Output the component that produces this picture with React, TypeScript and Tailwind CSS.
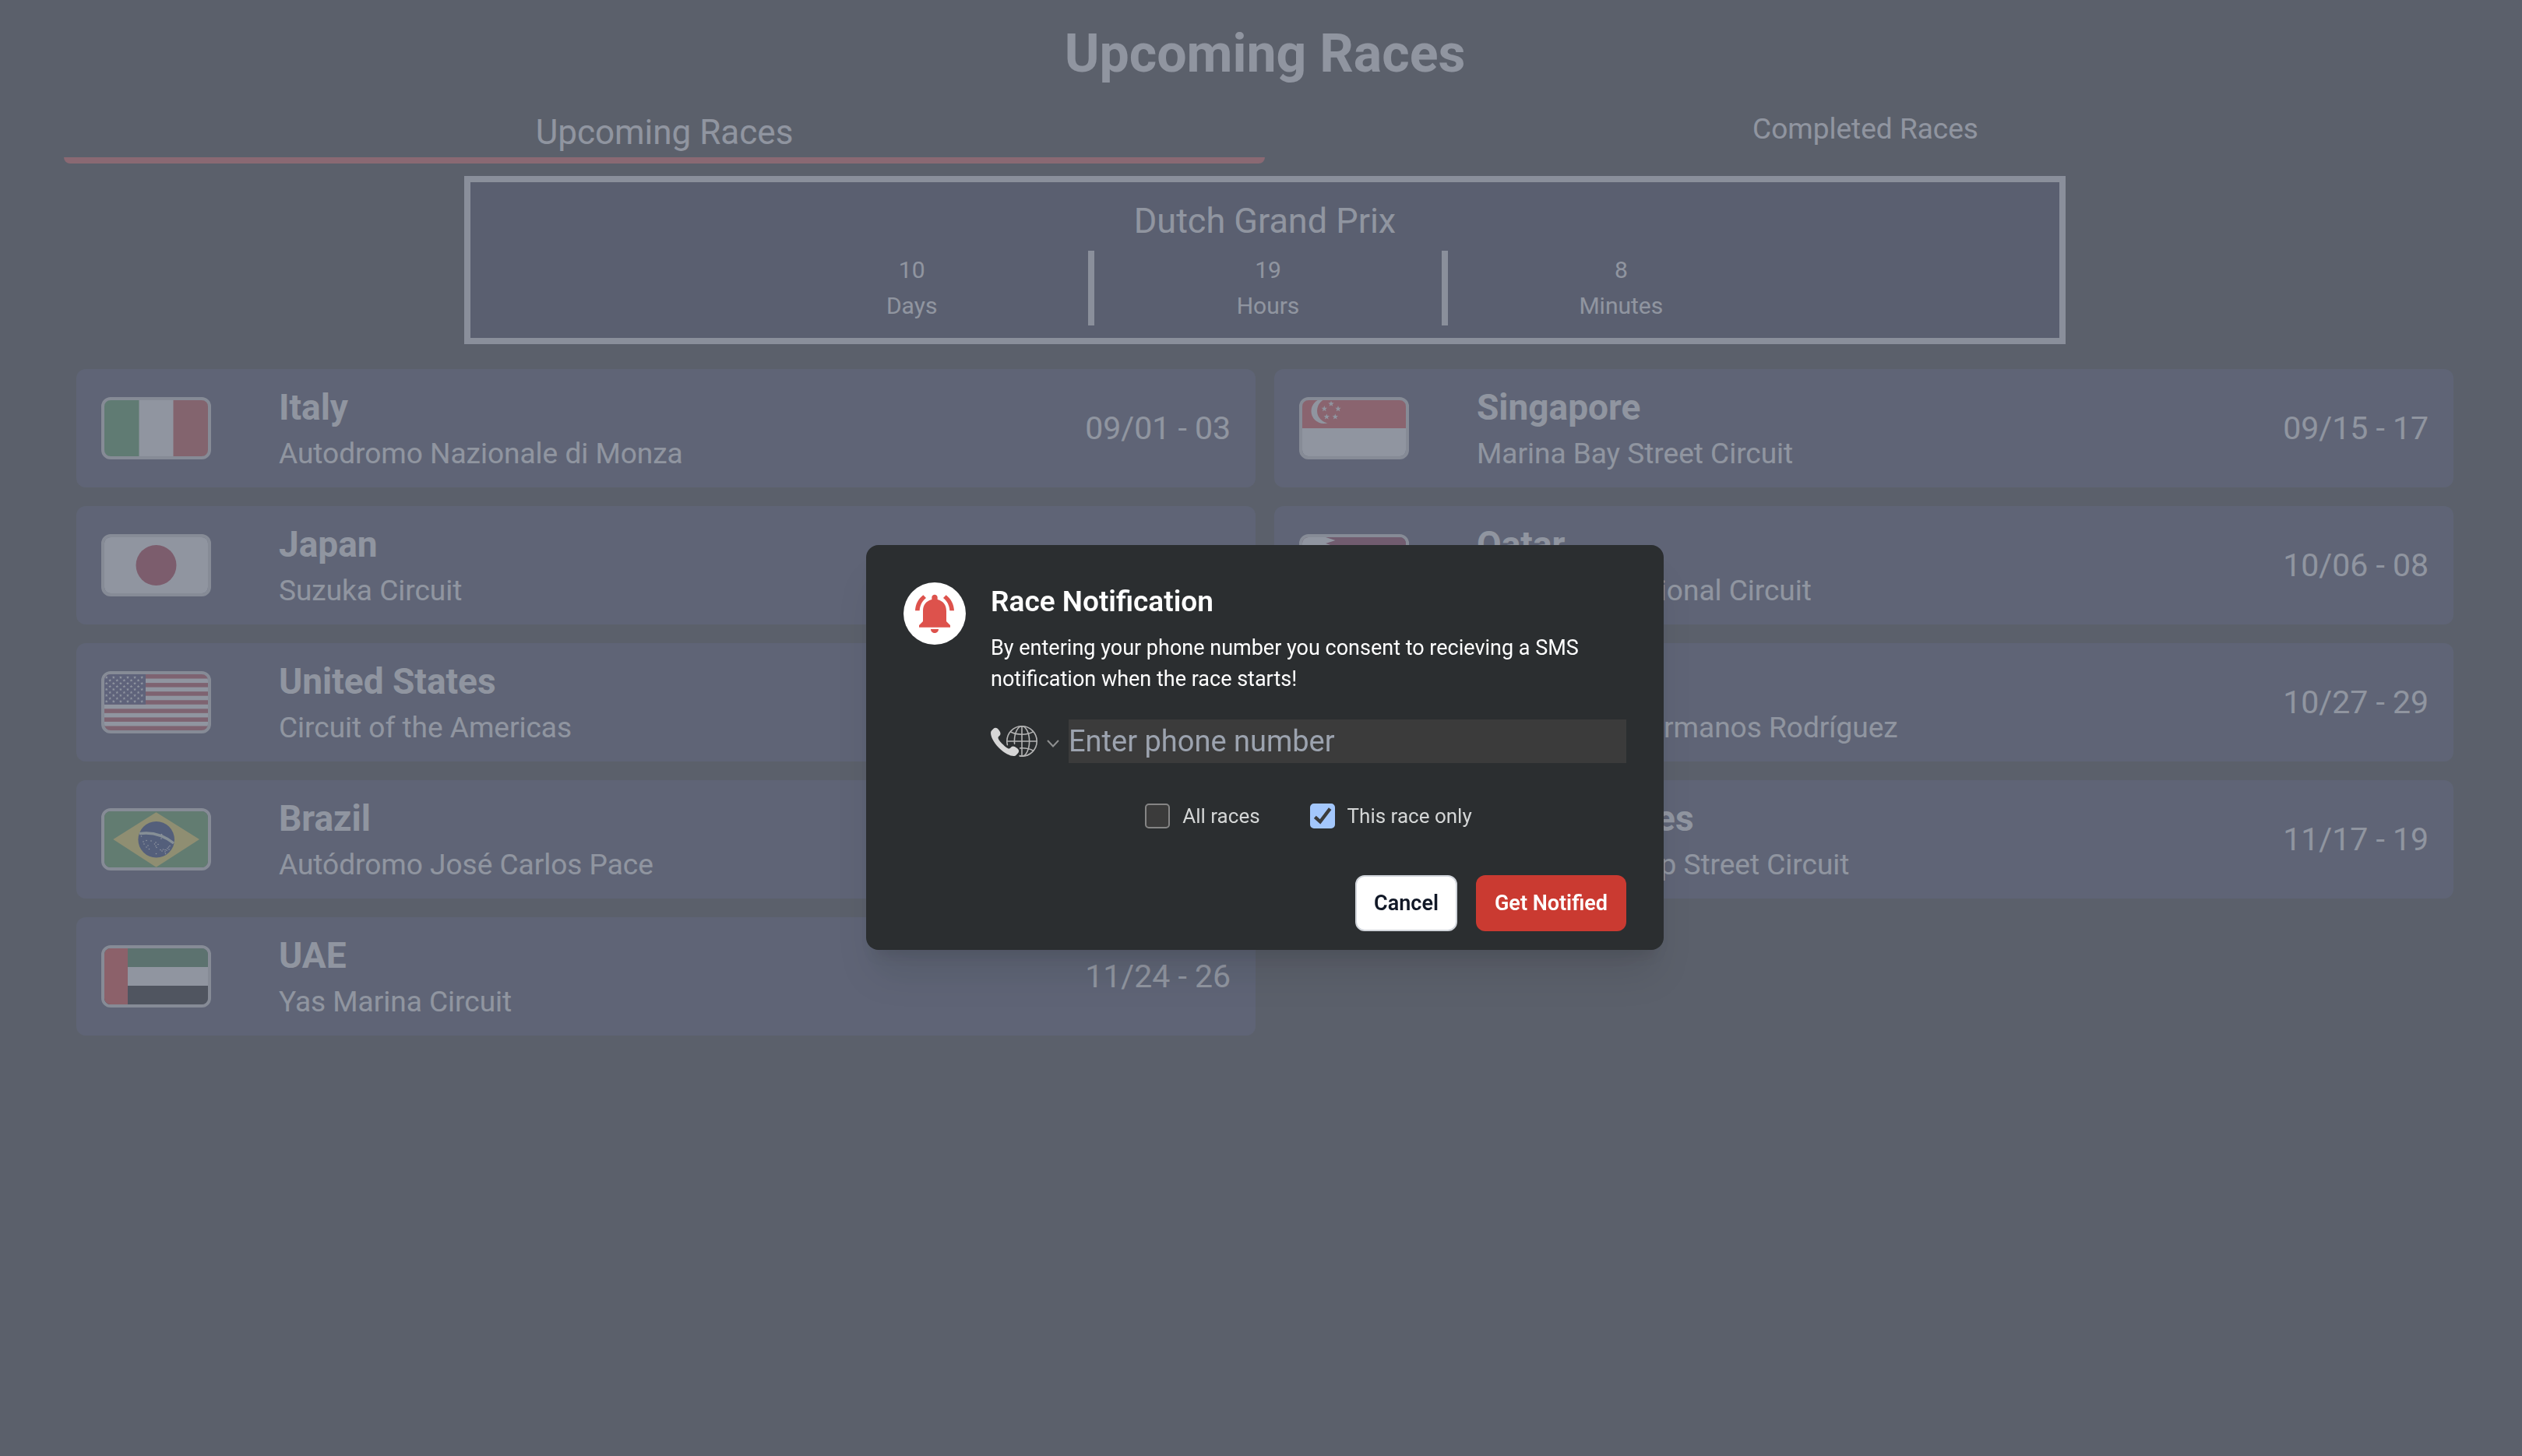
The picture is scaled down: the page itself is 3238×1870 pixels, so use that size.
import { useState, type ReactNode } from "react";

function starPoints(cx: number, cy: number, r: number) {
  return Array.from({ length: 10 }, (_, i) => {
    const radius = i % 2 === 0 ? r : r * 0.42;
    const angle = -Math.PI / 2 + (i * Math.PI) / 5;
    return `${(cx + radius * Math.cos(angle)).toFixed(2)},${(cy + radius * Math.sin(angle)).toFixed(2)}`;
  }).join(" ");
}

const singaporeStars = [[37, 4.7], [28.3, 11], [46, 11], [31.3, 21.3], [42.3, 21.3]];

const usStars = Array.from({ length: 9 }, (_, row) =>
  Array.from({ length: row % 2 === 0 ? 6 : 5 }, (_, col) => [(row % 2 === 0 ? 2.7 : 7.2) + col * 9.1, 4 + row * 3.87]),
).flat();

const brazilStars = [
  [47.5, 32], [54, 37.5], [60, 38], [51, 42], [54, 46], [56, 44], [57.5, 48.5], [50, 39], [73.5, 29.5], [73, 35],
  [66, 40], [64.5, 42], [69, 42.5], [66, 44.5], [67, 46.5], [66.5, 54.5], [72, 49.5], [74, 51], [75.5, 49], [78, 52],
  [78.5, 54.5], [80, 50], [81, 47.5], [82.5, 46], [84, 44.5], [83, 49], [78, 49.5],
];

const qatarEdge = Array.from({ length: 9 }, (_, i) => `L42.5 ${i * 8 + 4}L30 ${i * 8 + 8}`).join("");

const flags: Record<string, ReactNode> = {
  Italy: (
    <>
      <rect width="133" height="72" fill="#fff" />
      <rect width="44.5" height="72" fill="#40964c" />
      <rect x="88.5" width="44.5" height="72" fill="#cc3e3a" />
    </>
  ),
  Singapore: (
    <>
      <rect width="133" height="72" fill="#fff" />
      <rect width="133" height="36" fill="#e63e3c" />
      <circle cx="27.5" cy="14" r="16" fill="#fff" />
      <circle cx="35" cy="13.5" r="16" fill="#e63e3c" />
      {singaporeStars.map(([x, y]) => (
        <polygon key={`${x}-${y}`} points={starPoints(x, y, 3.9)} fill="#fff" />
      ))}
    </>
  ),
  Japan: (
    <>
      <rect width="133" height="72" fill="#fff" />
      <circle cx="66.5" cy="36" r="26" fill="#b02036" />
    </>
  ),
  Qatar: (
    <>
      <rect width="133" height="72" fill="#841c3c" />
      <path d={`M0 0L30 0${qatarEdge}L0 72Z`} fill="#fff" />
    </>
  ),
  "United States": (
    <>
      <rect width="133" height="72" fill="#fff" />
      {[0, 1, 2, 3, 4, 5, 6].map((i) => (
        <rect key={i} y={i * 11.08} width="133" height="5.54" fill="#b83a44" />
      ))}
      <rect width="53" height="38.8" fill="#3c3b6e" />
      {usStars.map(([x, y]) => (
        <polygon key={`${x}-${y}`} points={starPoints(x, y, 2.1)} fill="#fff" />
      ))}
    </>
  ),
  Mexico: (
    <>
      <rect width="133" height="72" fill="#fff" />
      <rect width="44.5" height="72" fill="#1f6847" />
      <rect x="88.5" width="44.5" height="72" fill="#cc2936" />
    </>
  ),
  Brazil: (
    <>
      <rect width="133" height="72" fill="#489a44" />
      <path d="M11.3 36L66.5 1.3L122 36L66.5 71.7Z" fill="#fae248" />
      <circle cx="66.7" cy="36.3" r="23.3" fill="#10286c" />
      <path d="M45 28.6Q69 25 89 41" fill="none" stroke="#d8e8d8" strokeWidth="3.4" />
      {brazilStars.map(([x, y]) => (
        <circle key={`${x}-${y}`} cx={x} cy={y} r="0.8" fill="#fff" />
      ))}
    </>
  ),
  UAE: (
    <>
      <rect width="133" height="24" fill="#30763e" />
      <rect y="24" width="133" height="24" fill="#fff" />
      <rect y="48" width="133" height="24" fill="#000" />
      <rect width="30" height="72" fill="#f0322a" />
    </>
  ),
};

const races = [
  { country: "Italy", circuit: "Autodromo Nazionale di Monza", date: "09/01 - 03" },
  { country: "Singapore", circuit: "Marina Bay Street Circuit", date: "09/15 - 17" },
  { country: "Japan", circuit: "Suzuka Circuit", date: "09/22 - 24" },
  { country: "Qatar", circuit: "Losail International Circuit", date: "10/06 - 08" },
  { country: "United States", circuit: "Circuit of the Americas", date: "10/20 - 22" },
  { country: "Mexico", circuit: "Autódromo Hermanos Rodríguez", date: "10/27 - 29" },
  { country: "Brazil", circuit: "Autódromo José Carlos Pace", date: "11/03 - 05" },
  { country: "United States", circuit: "Las Vegas Strip Street Circuit", date: "11/17 - 19" },
  { country: "UAE", circuit: "Yas Marina Circuit", date: "11/24 - 26" },
];

const countdown = [
  { value: 10, unit: "Days" },
  { value: 19, unit: "Hours" },
  { value: 8, unit: "Minutes" },
];

function RaceCard({ country, circuit, date }: (typeof races)[number]) {
  return (
    <li className="flex items-center rounded-xl bg-[#3c3f58] px-8 text-white">
      <svg
        viewBox="0 0 133 72"
        preserveAspectRatio="none"
        role="img"
        aria-label={`Flag of ${country}`}
        className="h-20 w-[141px] shrink-0 rounded-xl border-4 border-[#d8d8d8]"
      >
        {flags[country]}
      </svg>
      <div className="ml-[87px] flex-1 pt-5 pb-3">
        <h3 className="text-[46px] leading-[58px] font-bold">{country}</h3>
        <p className="text-[37px] leading-[62px]">{circuit}</p>
      </div>
      <p className="text-[41px] leading-[60px]">{date}</p>
    </li>
  );
}

function BellIcon() {
  return (
    <svg viewBox="0 0 240 240" className="size-20 shrink-0 rounded-full bg-white" aria-hidden="true">
      <g fill="#dd524c">
        <path d="M109 58C109 44 131 44 131 58V66C152 71 165 87 165 110V150L180 165V173H60V165L75 150V110C75 87 88 71 109 66Z" />
        <path d="M105 180H135C135 200 105 200 105 180Z" />
        <path d="M45 109C46 84 57 64 76 49L87 60C72 72 63 88 62 109Z" />
        <path d="M195 109C194 84 183 64 164 49L153 60C168 72 177 88 178 109Z" />
      </g>
    </svg>
  );
}

function InternationalIcon() {
  return (
    <svg viewBox="0 0 75 50" className="h-10 w-[60px]" aria-hidden="true">
      <g stroke="#b4b4b4" fill="none" strokeWidth="2" strokeMiterlimit="10">
        <path strokeLinecap="round" d="M47.2,36.1C48.1,36,49,36,50,36c7.4,0,14,1.7,18.5,4.3" />
        <path d="M68.6,9.6C64.2,12.3,57.5,14,50,14c-7.4,0-14-1.7-18.5-4.3" />
        <line x1="26" y1="25" x2="74" y2="25" />
        <line x1="50" y1="1" x2="50" y2="49" />
        <path
          strokeLinecap="round"
          d="M46.3,48.7c1.2,0.2,2.5,0.3,3.7,0.3c13.3,0,24-10.7,24-24S63.3,1,50,1S26,11.7,26,25c0,2,0.3,3.9,0.7,5.8"
        />
        <path
          strokeLinecap="round"
          d="M46.8,48.2c1,0.6,2.1,0.8,3.2,0.8c6.6,0,12-10.7,12-24S56.6,1,50,1S38,11.7,38,25c0,1.4,0.1,2.7,0.2,4c0,0.1,0,0.2,0,0.2"
        />
      </g>
      <path
        fill="#d6d6d6"
        d="M12.4,17.9c2.9-2.9,5.4-4.8,0.3-11.2S4.1,5.2,1.3,8.1C-2,11.4,1.1,23.5,13.1,35.6s24.3,15.2,27.5,11.9c2.8-2.8,7.8-6.3,1.4-11.5s-8.3-2.6-11.2,0.3c-2,2-7.2-2.2-11.7-6.7S10.4,19.9,12.4,17.9z"
      />
    </svg>
  );
}

function Checkbox({ label, checked, onChange }: { label: string; checked: boolean; onChange: () => void }) {
  return (
    <label className="flex items-center gap-4 text-[26px] leading-10 text-[#d4d6d6]">
      <span className="relative size-8">
        <input
          type="checkbox"
          checked={checked}
          onChange={onChange}
          className="block size-8 appearance-none rounded-[5px] border-2 border-[#858585] bg-[#3b3b3b] checked:border-[#a3c7fc] checked:bg-[#a3c7fc]"
        />
        {checked && (
          <svg viewBox="0 0 96 96" className="pointer-events-none absolute inset-0 size-8" aria-hidden="true">
            <path d="M19 52L39 70L77 20" fill="none" stroke="#3b3b3b" strokeWidth="13" />
          </svg>
        )}
      </span>
      {label}
    </label>
  );
}

function NotificationDialog() {
  const [scope, setScope] = useState<"all" | "one">("one");
  return (
    <div className="fixed inset-0 grid place-items-center bg-[#6b7280]/75 pt-[50px] pl-[10px]">
      <div
        role="dialog"
        aria-modal="true"
        aria-labelledby="dialog-title"
        className="w-[1024px] rounded-2xl bg-[#2b2e30] px-12 pt-12 pb-6 shadow-[0_40px_50px_-10px_rgb(0_0_0/0.1),0_16px_20px_-12px_rgb(0_0_0/0.1)]"
      >
        <div className="flex gap-8">
          <BellIcon />
          <div className="flex-1 text-white">
            <h2 id="dialog-title" className="text-[37px] leading-[50px] font-semibold">
              Race Notification
            </h2>
            <p className="mt-3.5 text-[27px] leading-10">
              By entering your phone number you consent to recieving a SMS notification when the race starts!
            </p>
            <div className="mt-8 flex items-center">
              <div className="relative mr-3 flex items-center gap-3">
                <InternationalIcon />
                <svg viewBox="0 0 16 16" className="size-4" aria-hidden="true">
                  <path d="M1 7L8 14.5L15 7" fill="none" stroke="#8f9091" strokeWidth="2" />
                </svg>
                <select aria-label="Phone number country" className="absolute inset-0 w-full opacity-0">
                  <option value="">International</option>
                </select>
              </div>
              <input
                type="tel"
                aria-label="Phone number"
                placeholder="Enter phone number"
                className="h-14 min-w-0 flex-1 bg-[#3b3b3b] text-[38px] text-white placeholder:text-[#9ca3af]"
              />
            </div>
            <div className="mt-12 flex justify-center gap-16">
              <Checkbox label="All races" checked={scope === "all"} onChange={() => setScope("all")} />
              <Checkbox label="This race only" checked={scope === "one"} onChange={() => setScope("one")} />
            </div>
          </div>
        </div>
        <div className="mt-14 flex justify-end gap-6 text-[27px] leading-10 font-semibold">
          <button type="button" className="rounded-xl border-2 border-[#d1d5db] bg-white px-[22px] py-3.5 text-[#111827]">
            Cancel
          </button>
          <button type="button" className="rounded-xl bg-[#ca3a31] px-6 py-4 text-white">
            Get Notified
          </button>
        </div>
      </div>
    </div>
  );
}

export default function App() {
  return (
    <div className="min-h-screen bg-[#2f2e2e] font-['Roboto',sans-serif]">
      <main className="pt-[30px] pr-[72px] pl-[82px] text-white">
        <h1 className="text-center text-[68px] leading-[78px] font-bold">Upcoming Races</h1>
        <div role="tablist" className="mt-8 grid grid-cols-2 items-start">
          <button
            type="button"
            role="tab"
            aria-selected="true"
            className="rounded-b-lg border-b-8 border-[#e5504b] pb-0.5 text-[44px] leading-[60px]"
          >
            Upcoming Races
          </button>
          <button type="button" role="tab" aria-selected="false" className="text-[37px] leading-[52px]">
            Completed Races
          </button>
        </div>
        <section className="mx-auto mt-4 w-2/3 border-8 border-[#e5e7eb] bg-[#282a40] py-4 text-center">
          <h2 className="text-[45px] leading-[68px]">Dutch Grand Prix</h2>
          <div className="mx-auto mt-1 grid w-2/3 grid-cols-3 text-[30px] leading-[46px]">
            {countdown.map(({ value, unit }) => (
              <div key={unit} className="border-l-8 border-[#e5e7eb] pt-0.5 pb-0.5 first:border-l-0">
                <p>{value}</p>
                <p>{unit}</p>
              </div>
            ))}
          </div>
        </section>
        <ul className="mx-4 mt-8 grid grid-cols-2 gap-6">
          {races.map((race) => (
            <RaceCard key={race.date} {...race} />
          ))}
        </ul>
      </main>
      <NotificationDialog />
    </div>
  );
}
